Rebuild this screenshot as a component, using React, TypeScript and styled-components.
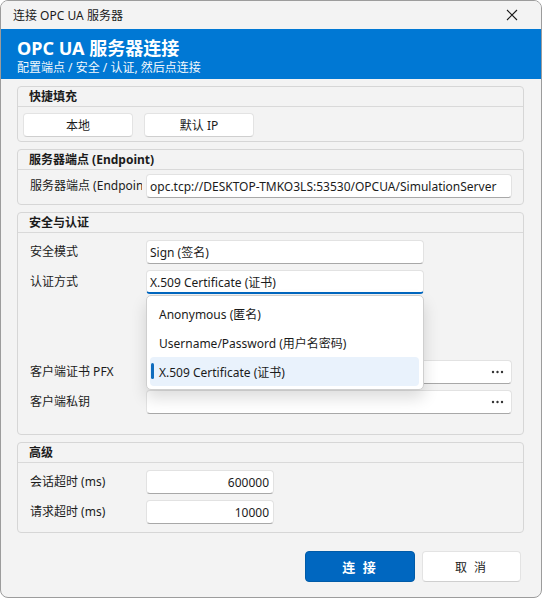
import React from "react";
import styled, { createGlobalStyle } from "styled-components";

const GlobalStyle = createGlobalStyle`
  html, body {
    margin: 0;
    padding: 0;
    background: #ffffff;
  }
  body {
    font-family: "Noto Sans", "Noto Sans CJK SC", sans-serif;
    color: #1b1b1b;
  }
  * {
    box-sizing: border-box;
  }
`;

const AUTH_OPTIONS = [
  "Anonymous (匿名)",
  "Username/Password (用户名密码)",
  "X.509 Certificate (证书)",
];

const Dots = () => (
  <BrowseDots width="13" height="4" viewBox="0 0 13 4">
    <circle cx="2" cy="2" r="1.2" fill="#333" />
    <circle cx="6.5" cy="2" r="1.2" fill="#333" />
    <circle cx="11" cy="2" r="1.2" fill="#333" />
  </BrowseDots>
);

export default function App() {
  const selectedAuth = AUTH_OPTIONS[2];

  return (
    <>
      <GlobalStyle />
      <Window>
        <TitleBar>
          <TitleText>连接 OPC UA 服务器</TitleText>
          <CloseButton aria-label="关闭">
            <svg width="12" height="12" viewBox="0 0 12 12">
              <path d="M1 1 L11 11 M11 1 L1 11" stroke="#1b1b1b" strokeWidth="1.1" fill="none" />
            </svg>
          </CloseButton>
        </TitleBar>

        <Banner>
          <BannerTitle>OPC UA 服务器连接</BannerTitle>
          <BannerSubtitle>配置端点 / 安全 / 认证, 然后点连接</BannerSubtitle>
        </Banner>

        <Body>
          <Group>
            <GroupHeader>快捷填充</GroupHeader>
            <QuickFill>
              <QuickButton>本地</QuickButton>
              <QuickButton>默认 IP</QuickButton>
            </QuickFill>
          </Group>

          <Group>
            <GroupHeader>服务器端点 (Endpoint)</GroupHeader>
            <GroupBody $top={4} $bottom={6}>
              <Row>
                <FieldLabel title="服务器端点 (Endpoint)">服务器端点 (Endpoint)</FieldLabel>
                <TextInput>
                  opc.tcp://DESKTOP-TMKO3LS:53530/OPCUA/SimulationServer
                </TextInput>
              </Row>
            </GroupBody>
          </Group>

          <Group>
            <GroupHeader>安全与认证</GroupHeader>
            <GroupBody $top={7} $bottom={20}>
              <Row>
                <FieldLabel>安全模式</FieldLabel>
                <Combo>Sign (签名)</Combo>
              </Row>
              <Row>
                <FieldLabel>认证方式</FieldLabel>
                <ComboWrap>
                  <Combo $open>{selectedAuth}</Combo>
                  <Popup>
                    {AUTH_OPTIONS.map((opt) => (
                      <PopupItem key={opt} $selected={opt === selectedAuth}>
                        {opt === selectedAuth && <SelectedBar />}
                        {opt}
                      </PopupItem>
                    ))}
                  </Popup>
                </ComboWrap>
              </Row>
              {/* username / password rows keep their space but are hidden for certificate auth */}
              <Row $hidden>
                <FieldLabel>用户名</FieldLabel>
                <TextInput />
              </Row>
              <Row $hidden>
                <FieldLabel>密码</FieldLabel>
                <TextInput />
              </Row>
              <Row>
                <FieldLabel>客户端证书 PFX</FieldLabel>
                <TextInput>
                  <Dots />
                </TextInput>
              </Row>
              <Row>
                <FieldLabel>客户端私钥</FieldLabel>
                <TextInput>
                  <Dots />
                </TextInput>
              </Row>
            </GroupBody>
          </Group>

          <Group>
            <GroupHeader>高级</GroupHeader>
            <GroupBody $top={7} $bottom={8}>
              <Row>
                <FieldLabel>会话超时 (ms)</FieldLabel>
                <NumberInput>600000</NumberInput>
              </Row>
              <Row>
                <FieldLabel>请求超时 (ms)</FieldLabel>
                <NumberInput>10000</NumberInput>
              </Row>
            </GroupBody>
          </Group>
        </Body>

        <Footer>
          <PrimaryButton>连 接</PrimaryButton>
          <SecondaryButton>取 消</SecondaryButton>
        </Footer>
      </Window>
    </>
  );
}

// ======================
// Styled Components
// ======================

const Window = styled.div`
  width: 542px;
  height: 598px;
  display: flex;
  flex-direction: column;
  background: #f3f3f3;
  border: 1px solid #9c9c9c;
  border-radius: 8px;
  overflow: hidden;
`;

const TitleBar = styled.div`
  height: 28px;
  display: flex;
  align-items: center;
  justify-content: space-between;
  padding-left: 12px;
  background: #f3f3f3;
`;

const TitleText = styled.span`
  font-size: 12px;
  color: #1b1b1b;
`;

const CloseButton = styled.div`
  width: 36px;
  height: 28px;
  margin-right: 11px;
  display: flex;
  align-items: center;
  justify-content: center;
`;

const Banner = styled.div`
  height: 50px;
  background: #0078d4;
  color: #ffffff;
  padding: 7px 16px 0;
  display: flex;
  flex-direction: column;
`;

const BannerTitle = styled.div`
  font-size: 18px;
  font-weight: 700;
  line-height: 25px;
`;

const BannerSubtitle = styled.div`
  font-size: 12px;
  line-height: 14px;
  opacity: 0.95;
`;

const Body = styled.div`
  padding: 7px 17px 0 16px;
  display: flex;
  flex-direction: column;
  gap: 7px;
`;

const Group = styled.div`
  border: 1px solid #d6d6d6;
  border-radius: 4px;
  background: #f3f3f3;
`;

const GroupHeader = styled.div`
  height: 20px;
  line-height: 19px;
  padding-left: 11px;
  font-size: 12px;
  font-weight: 700;
  color: #1b1b1b;
  border-bottom: 1px solid #d9d9d9;
`;

const GroupBody = styled.div<{ $top: number; $bottom: number }>`
  padding: ${({ $top }) => $top}px 11px ${({ $bottom }) => $bottom}px 12px;
  display: flex;
  flex-direction: column;
  gap: 6px;
`;

const QuickFill = styled.div`
  display: flex;
  gap: 11px;
  padding: 6px 0 4px 5px;
`;

const QuickButton = styled.div`
  width: 110px;
  height: 24px;
  display: flex;
  align-items: center;
  justify-content: center;
  background: #ffffff;
  border: 1px solid #e3e3e3;
  border-bottom-color: #cfcfcf;
  border-radius: 4px;
  font-size: 12px;
  color: #1b1b1b;
`;

const Row = styled.div<{ $hidden?: boolean }>`
  display: grid;
  grid-template-columns: 116px 1fr;
  align-items: center;
  height: 24px;
  visibility: ${({ $hidden }) => ($hidden ? "hidden" : "visible")};
`;

const FieldLabel = styled.div`
  font-size: 12px;
  color: #1b1b1b;
  white-space: nowrap;
  overflow: hidden;
  width: 112px;
  margin-top: -3px;
`;

const fieldBox = `
  height: 24px;
  display: flex;
  align-items: center;
  background: #ffffff;
  border: 1px solid #e2e2e2;
  border-bottom-color: #a8a8a8;
  border-radius: 4px;
  font-size: 12px;
  color: #1b1b1b;
  white-space: nowrap;
  overflow: hidden;
`;

const TextInput = styled.div`
  ${fieldBox}
  width: 100%;
  padding: 0 4px 0 3px;
`;

const NumberInput = styled.div`
  ${fieldBox}
  width: 128px;
  justify-content: flex-end;
  padding: 0 4px;
`;

const ComboWrap = styled.div`
  position: relative;
`;

const Combo = styled.div<{ $open?: boolean }>`
  ${fieldBox}
  width: 278px;
  padding: 0 3px;
  ${({ $open }) =>
    $open &&
    `
    border-bottom: 2px solid #0067c0;
  `}
`;

const Popup = styled.div`
  position: absolute;
  top: 25px;
  left: 0;
  width: 278px;
  padding: 3px 3px;
  background: #ffffff;
  border: 1px solid #cfcfcf;
  border-radius: 5px;
  box-shadow: 0 8px 16px rgba(0, 0, 0, 0.14);
  z-index: 10;
`;

const PopupItem = styled.div<{ $selected?: boolean }>`
  position: relative;
  height: 29px;
  display: flex;
  align-items: center;
  padding-left: 9px;
  margin-right: 1px;
  border-radius: 4px;
  font-size: 12px;
  color: #1b1b1b;
  background: ${({ $selected }) => ($selected ? "#e9f2fc" : "transparent")};
`;

const SelectedBar = styled.span`
  position: absolute;
  left: 1px;
  top: 6px;
  width: 3px;
  height: 16px;
  border-radius: 2px;
  background: #0f6cbd;
`;

const BrowseDots = styled.svg`
  margin-left: auto;
  margin-right: 3px;
  flex-shrink: 0;
`;

const Footer = styled.div`
  display: flex;
  justify-content: flex-end;
  gap: 7px;
  padding: 18px 20px 0 0;
`;

const PrimaryButton = styled.div`
  width: 110px;
  height: 31px;
  display: flex;
  align-items: center;
  justify-content: center;
  background: #0067c0;
  border: 1px solid #005ba8;
  border-radius: 4px;
  color: #ffffff;
  font-size: 13px;
  font-weight: 700;
  letter-spacing: 2px;
`;

const SecondaryButton = styled.div`
  width: 99px;
  height: 31px;
  display: flex;
  align-items: center;
  justify-content: center;
  background: #ffffff;
  border: 1px solid #e3e3e3;
  border-bottom-color: #cfcfcf;
  border-radius: 4px;
  color: #1b1b1b;
  font-size: 12px;
  letter-spacing: 2px;
`;
